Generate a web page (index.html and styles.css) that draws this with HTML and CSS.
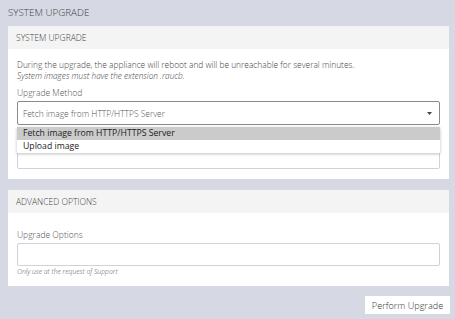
FILE: index.html
```html
<!DOCTYPE html>
<html>
<head>
<meta charset="utf-8">
<link rel="stylesheet" href="styles.css">
</head>
<body>
<div class="page-title">SYSTEM UPGRADE</div>
<div class="panel">
  <div class="panel-head">SYSTEM UPGRADE</div>
  <div class="panel-body">
    <p class="desc">During the upgrade, the appliance will reboot and will be unreachable for several minutes.</p>
    <p class="desc-note">System images must have the extension .raucb.</p>
    <div class="field">
      <div class="label">Upgrade Method</div>
      <div class="select-wrap">
        <div class="select">
          <span>Fetch image from HTTP/HTTPS Server</span>
          <svg class="caret" width="5" height="3" viewBox="0 0 5 3"><path d="M0 0h5L2.5 3z" fill="#444"/></svg>
        </div>
        <ul class="dropdown">
          <li class="opt active">Fetch image from HTTP/HTTPS Server</li>
          <li class="opt">Upload image</li>
        </ul>
      </div>
    </div>
    <div class="field field-url">
      <div class="label-spacer"></div>
      <div class="input"></div>
    </div>
  </div>
</div>
<div class="panel panel-adv">
  <div class="panel-head">ADVANCED OPTIONS</div>
  <div class="panel-body">
    <div class="field">
      <div class="label">Upgrade Options</div>
      <div class="input"></div>
      <div class="help">Only use at the request of Support</div>
    </div>
  </div>
</div>
<div class="actions">
  <button class="btn">Perform Upgrade</button>
</div>
</body>
</html>
```
FILE: styles.css
```css
html, body {
  margin: 0;
  padding: 0;
}
body {
  background: #d6d8e4;
  font-family: "Open Sans", "Noto Sans", sans-serif;
  font-weight: 300;
  color: #555;
  width: 455px;
  height: 319px;
  overflow: hidden;
}
.page-title {
  height: 26px;
  line-height: 26px;
  padding-left: 8px;
  font-size: 9.8px;
  color: #444;
}
.panel {
  margin: 0 6px 0 8px;
  background: #fff;
}
.panel-head {
  height: 23px;
  line-height: 23px;
  background: #f4f4f4;
  padding-left: 8px;
  font-size: 8.5px;
  color: #444;
}
.panel-body {
  padding: 10px 9px 10px 9px;
}
.desc, .desc-note {
  margin: 0;
  font-size: 8.4px;
  line-height: 11px;
  color: #444;
}
.desc-note {
  font-style: italic;
  font-size: 8.25px;
}
.field {
  margin-top: 6px;
}
.field-url {
  margin-top: 7px;
}
.label {
  font-size: 8.5px;
  line-height: 11px;
  color: #555;
  margin-bottom: 3px;
}
.label-spacer {
  height: 11px;
  margin-bottom: 3px;
}
.select-wrap {
  position: relative;
}
.select {
  height: 22px;
  border: 1px solid #8a8a8a;
  border-radius: 2px;
  display: flex;
  align-items: center;
  justify-content: space-between;
  padding: 0 7px 0 5px;
  font-size: 8.45px;
  color: #555;
}
.caret {
  display: block;
}
.dropdown {
  position: absolute;
  left: 0;
  right: 0;
  top: 26px;
  margin: 0;
  padding: 0;
  list-style: none;
  background: #fff;
  box-shadow: 0 1px 3px rgba(0,0,0,0.25);
  z-index: 2;
}
.opt {
  height: 13px;
  line-height: 13px;
  padding-left: 6px;
  font-size: 8.7px;
  font-weight: 400;
  color: #222;
}
.opt.active {
  background: #cbcbcb;
}
.input {
  height: 21px;
  border: 1px solid #cfd2dc;
  border-radius: 2px;
}
.panel-adv {
  margin-top: 11px;
}
.help {
  font-size: 6.8px;
  font-style: italic;
  color: #555;
  margin-top: 2px;
  line-height: 8px;
}
.actions {
  display: flex;
  justify-content: flex-end;
  padding: 10px 5px 0 0;
}
.btn {
  background: #fff;
  border: none;
  font-family: "Open Sans", "Noto Sans", sans-serif;
  font-weight: 300;
  font-size: 9.1px;
  color: #333;
  height: 18px;
  width: 85px;
  padding: 0;
}
```
